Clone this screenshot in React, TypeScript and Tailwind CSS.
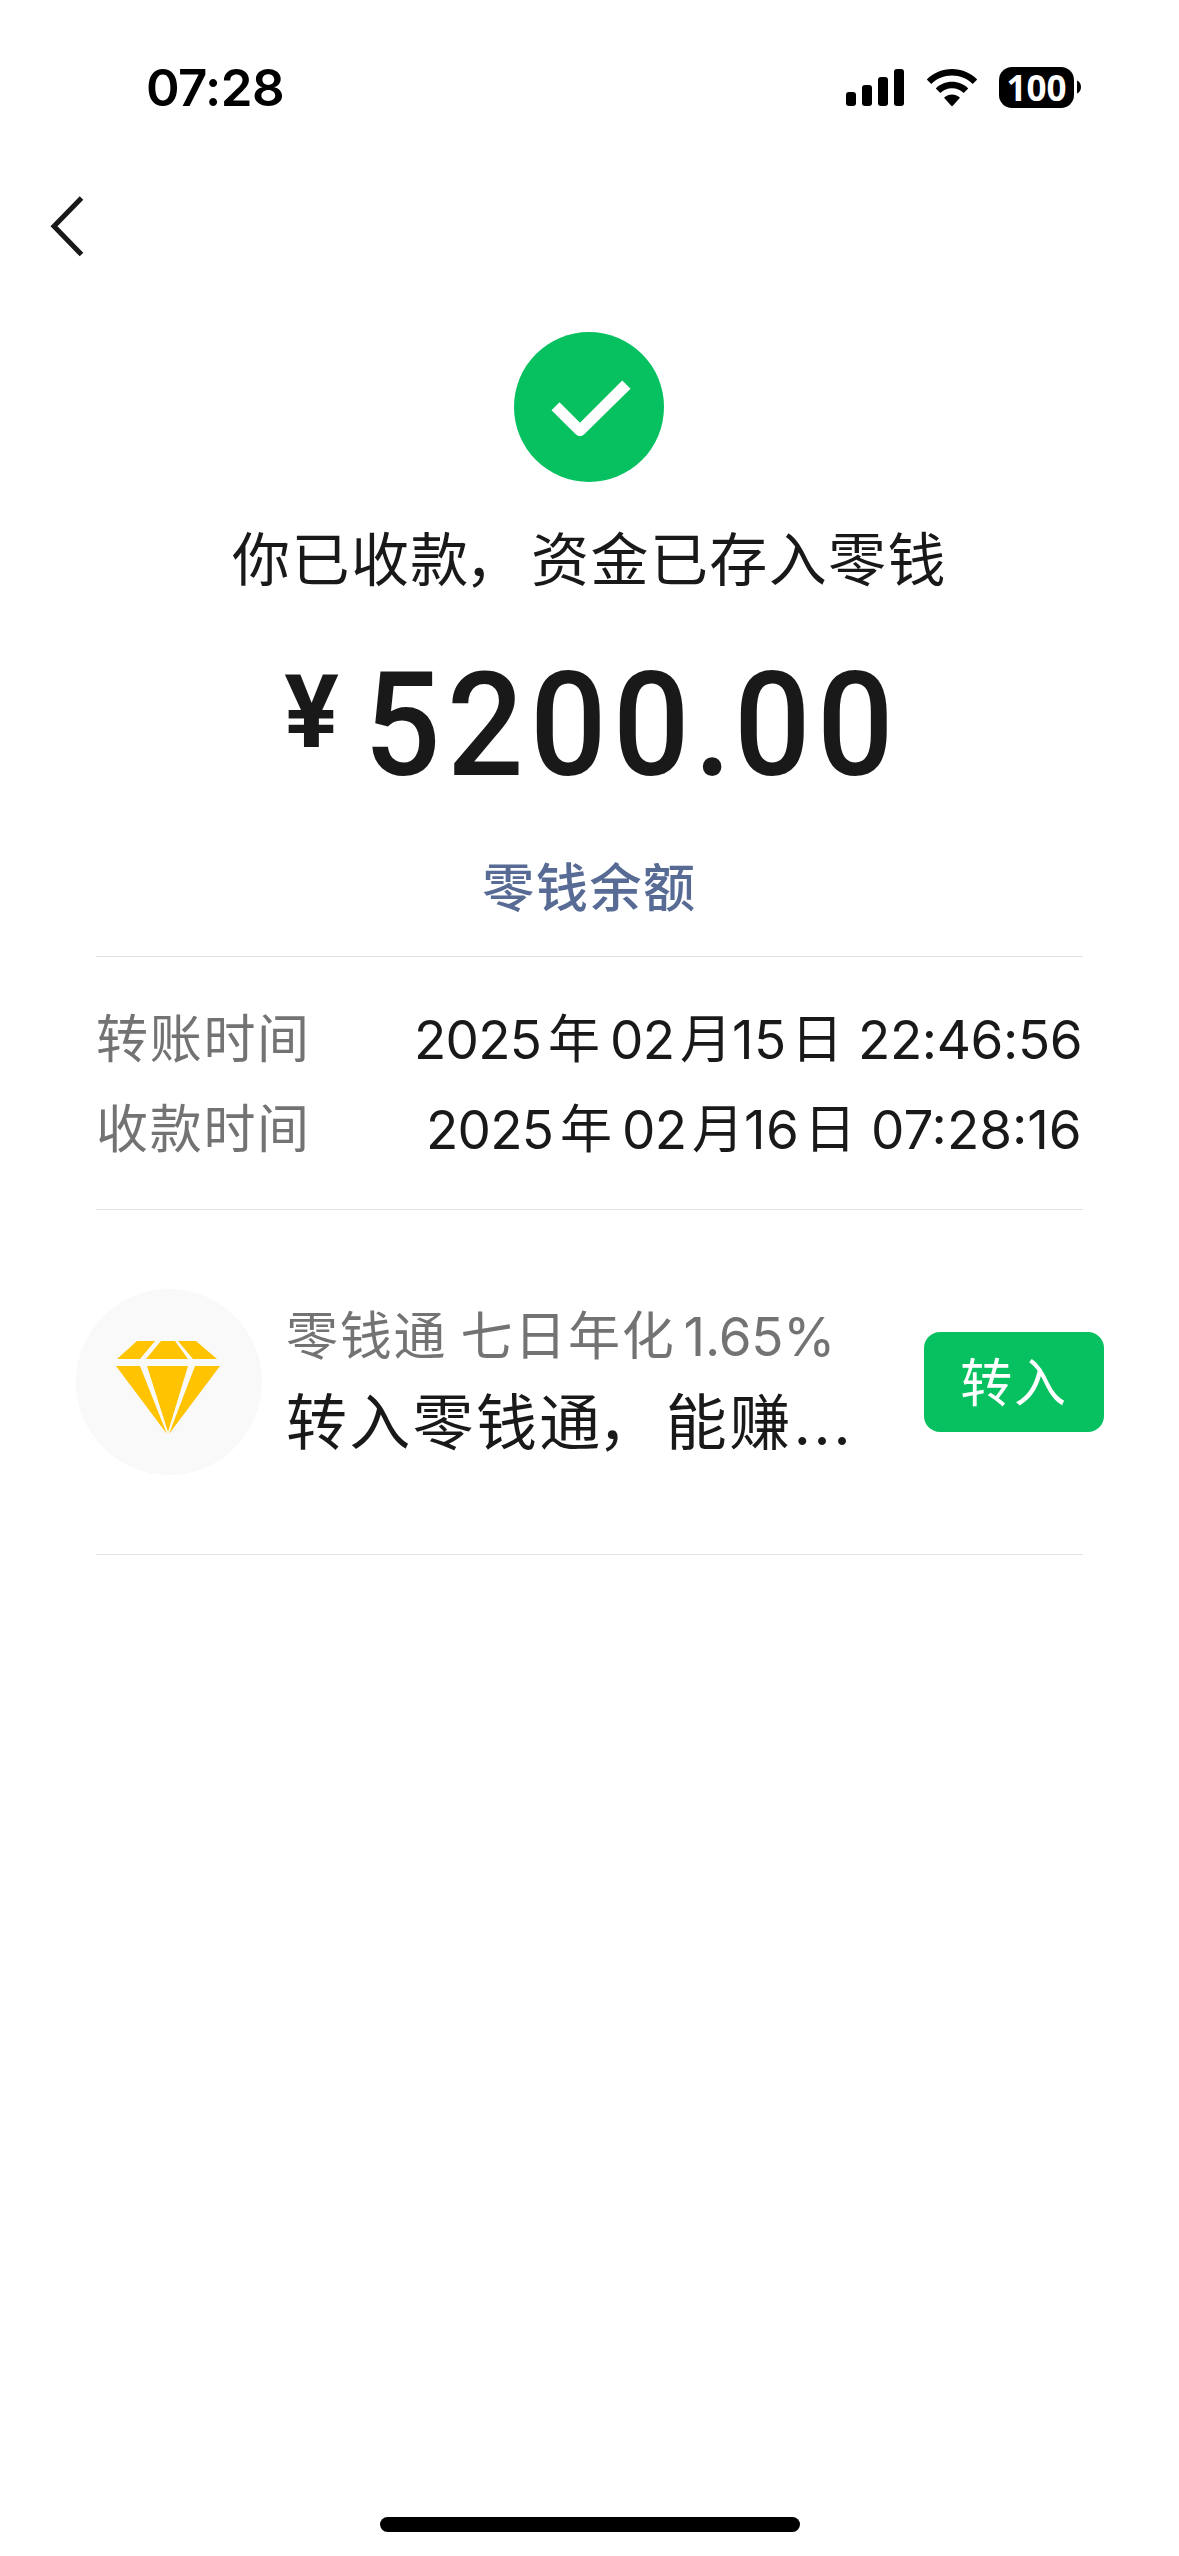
import type { ReactNode } from 'react';

const cjk = "font-['Inter','Noto_Sans_CJK_SC',sans-serif]";

function StatusBar() {
  return (
    <div className="flex h-[176px] items-start justify-between pl-[146px] pr-[98px]">
      <div className="mt-[62px] font-['Inter',sans-serif] text-[51px] font-semibold leading-[52px] tracking-[-0.6px] text-black">
        07:28
      </div>
      <div className="mt-[66px] flex items-center">
        <svg width="60" height="42" viewBox="0 0 60 42" className="mr-[20px]">
          <rect x="0" y="26" width="10" height="14" rx="3" />
          <rect x="16" y="19" width="10" height="21" rx="3" />
          <rect x="32" y="11" width="10" height="29" rx="3" />
          <rect x="48" y="3" width="10" height="37" rx="3" />
        </svg>
        <svg width="52" height="42" viewBox="0 0 52 42" className="mr-[21px]">
          <path d="M26 3C35.500 3 44.500 6.800 51.200 13.500L46.700 18C41.200 12.600 33.800 9.600 26 9.600S10.800 12.600 5.300 18L0.800 13.500C7.500 6.800 16.500 3 26 3Z" />
          <path d="M26 15.800C32.200 15.800 37.900 18.200 42.200 22.400L37.700 26.900C34.600 23.900 30.400 22.200 26 22.200S17.400 23.900 14.300 26.900L9.800 22.400C14.100 18.200 19.800 15.800 26 15.800Z" />
          <path d="M26 28.400C28.900 28.400 31.500 29.500 33.600 31.300Q34 31.800 33.500 32.300L27 39.600Q26 40.700 25 39.600L18.500 32.300Q18 31.800 18.400 31.300C20.500 29.500 23.100 28.400 26 28.400Z" />
        </svg>
        <div className="flex h-[41px] w-[75px] items-center justify-center rounded-[13px] bg-black font-['Open_Sans',sans-serif] text-[35px] font-bold leading-[41px] text-white">
          100
        </div>
        <svg width="7" height="14" viewBox="0 0 7 14">
          <path d="M3 0.500C5.500 1.500 7 4 7 7S5.500 12.500 3 13.500Z" />
        </svg>
      </div>
    </div>
  );
}

type Stamp = { year: string; month: string; day: string; time: string };

function TimeRow({ label, stamp, dayWidth, timeWidth }: { label: string; stamp: Stamp; dayWidth: string; timeWidth: string }) {
  return (
    <div className="flex h-[90px] items-center justify-between whitespace-nowrap text-[52px] leading-[90px]">
      <span className="tracking-[1.700px] text-[#737373]">{label}</span>
      <span className="-mr-[3px] flex text-[53px] tracking-[-0.8px] text-[#191919]">
        <span className="w-[134px]">{stamp.year}</span>
        <Unit width="w-[62px]">年</Unit>
        <span className="w-[70px]">{stamp.month}</span>
        <Unit width="w-[52px]">月</Unit>
        <span className={`${dayWidth} tracking-[0.5px]`}>{stamp.day}</span>
        <Unit width="w-[67px]">日</Unit>
        <span className={timeWidth}>{stamp.time}</span>
      </span>
    </div>
  );
}

function Unit({ width, children }: { width: string; children: ReactNode }) {
  return <span className={`${width} text-[52px]`}>{children}</span>;
}

function Comma() {
  return <span className="relative -left-[5px]">，</span>;
}

export default function App() {
  return (
    <div className={`${cjk} flex h-[2556px] w-[1179px] flex-col overflow-hidden bg-white`} lang="zh-CN">
      <StatusBar />

      <div className="flex h-[100px] items-center pl-[48px]">
        <svg width="40" height="64" viewBox="0 0 40 64" fill="none" stroke="#191919" strokeWidth="5">
          <path d="M33.500 4L6 32.300L33.500 60.600" />
        </svg>
      </div>

      <div className="mt-[56px] flex flex-col items-center">
        <svg width="150" height="150" viewBox="0 0 150 150" className="mr-px">
          <circle cx="75" cy="75" r="75" fill="#07c160" />
          <path d="M37.500 78.300L45.500 70.300L66 90.800L108.300 48.600L116.500 56.800L70 102.500Q66 106 62 102.500Z" fill="#fff" />
        </svg>
        <div className="mt-[36px] whitespace-nowrap text-[58px] leading-[84px] tracking-[1.400px] text-[#191919]">
          你已收款<Comma /><span className="ml-[2px]">资金已存入零钱</span>
        </div>
        <div className="mt-[53px] flex h-[140px] items-start font-['Roboto',sans-serif] text-[#191919]">
          <span className="mr-[25px] mt-[7px] text-[102px] font-bold leading-[100px]">¥</span>
          <span className="w-[531px] origin-left scale-x-[0.93] whitespace-nowrap text-[145px] font-medium leading-[140px] tracking-[6.800px]">
            5200<span className="-ml-[2px] -mr-[4px]">.</span>00
          </span>
        </div>
        <div className="mt-[55px] text-[52px] font-medium leading-[78px] tracking-[1.600px] text-[#576b95]">
          零钱余额
        </div>
      </div>

      <div className="mx-[96px] mt-[28px] border-y border-[#e3e3e3] pb-[34px] pt-[38px]">
        <TimeRow
          label="转账时间"
          stamp={{ year: '2025', month: '02', day: '15', time: '22:46:56' }}
          dayWidth="w-[59px]"
          timeWidth="w-[228px] tracking-[-0.4px]"
        />
        <TimeRow
          label="收款时间"
          stamp={{ year: '2025', month: '02', day: '16', time: '07:28:16' }}
          dayWidth="w-[60px]"
          timeWidth="w-[215px] tracking-[0px]"
        />
      </div>

      <div className="flex h-[344px] items-center pl-[76px] pr-[75px]">
        <div className="flex size-[186px] shrink-0 items-center justify-center rounded-full bg-[#f9f9f9]">
          <svg width="106" height="96" viewBox="0 0 106 96" fill="#ffc300" className="mr-[2px] mt-[11px]">
            <path d="M22 1H40L25 19H2Z" />
            <path d="M46 1H60L73 19H31Z" />
            <path d="M63 1H81L102 19H78Z" />
            <path d="M1 26H25L52 94Z" />
            <path d="M32 26H73L53 92Z" />
            <path d="M80 26H105L54 94Z" />
          </svg>
        </div>
        <div className="ml-[24px] flex flex-1 flex-col whitespace-nowrap">
          <div className="flex text-[52px] leading-[80px] tracking-[1.800px] text-[#737373]">
            零钱通<span className="ml-[13px]">七日年化</span>
            <span className="ml-[8px] text-[53px] tracking-[-0.2px]">1.65%</span>
          </div>
          <div className="mt-[2px] text-[61px] leading-[88px] tracking-[2.300px] text-[#191919]">
            转入零钱通<Comma />能赚<span className="ml-[1px]">...</span>
          </div>
        </div>
        <button className="flex h-[100px] w-[180px] items-center justify-center rounded-[16px] bg-[#07c160] pt-[3px] text-[52px] leading-[97px] tracking-[1.700px] text-white">
          转入
        </button>
      </div>
      <div className="mx-[96px] h-px shrink-0 bg-[#e3e3e3]" />

      <div className="mx-auto mb-[24px] mt-auto h-[15px] w-[420px] rounded-full bg-black" />
    </div>
  );
}
